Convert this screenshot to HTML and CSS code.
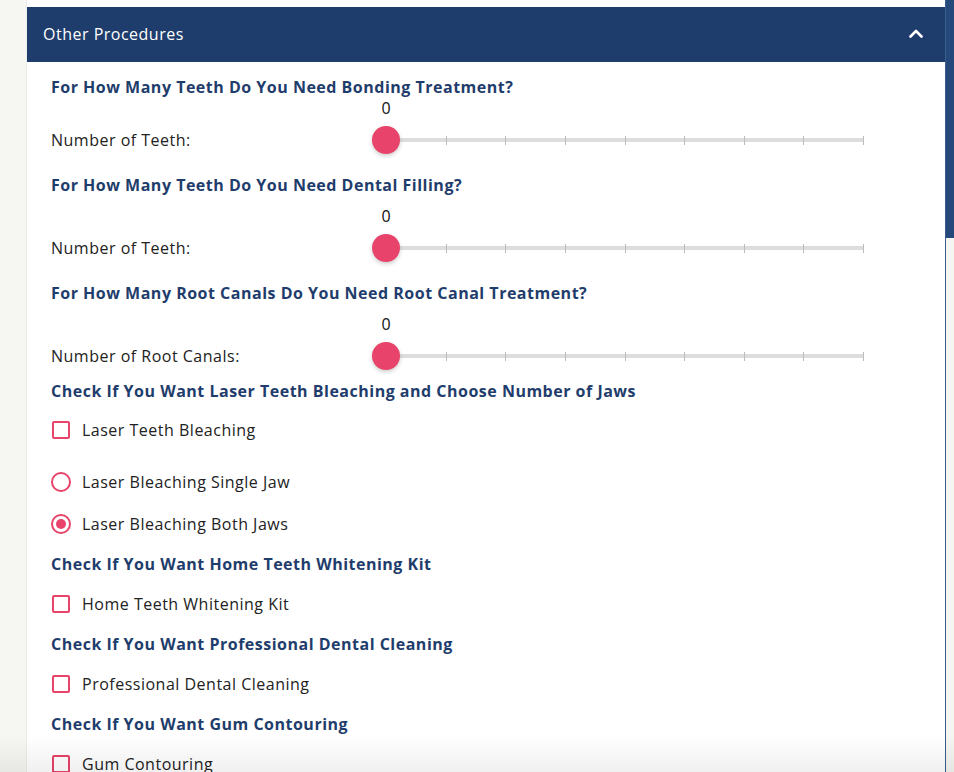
FILE: index.html
```html
<!DOCTYPE html>
<html lang="en">
<head>
<meta charset="utf-8">
<title>Other Procedures</title>
<link rel="stylesheet" href="styles.css">
</head>
<body>
<div class="page">
  <div class="gutter"></div>
  <main class="panel">
    <div class="panel-top"></div>
    <header class="acc-head">
      <span class="acc-title">Other Procedures</span>
      <svg class="chev" width="14" height="9" viewBox="0 0 14 9"><polyline points="1.5,7.5 7,2 12.5,7.5" fill="none" stroke="#fff" stroke-width="2.6" stroke-linecap="round" stroke-linejoin="round"/></svg>
    </header>
    <div class="acc-body">
      <h3 class="q q-first">For How Many Teeth Do You Need Bonding Treatment?</h3>
      <div class="slider-row slider-first">
        <span class="s-label">Number of Teeth:</span>
        <div class="slider">
          <span class="s-val">0</span>
          <div class="s-track">
            <div class="ticks"><i></i><i></i><i></i><i></i><i></i><i></i><i></i><i></i><i></i></div>
            <span class="thumb"></span>
          </div>
        </div>
      </div>

      <h3 class="q q-after-slider">For How Many Teeth Do You Need Dental Filling?</h3>
      <div class="slider-row">
        <span class="s-label">Number of Teeth:</span>
        <div class="slider">
          <span class="s-val">0</span>
          <div class="s-track">
            <div class="ticks"><i></i><i></i><i></i><i></i><i></i><i></i><i></i><i></i><i></i></div>
            <span class="thumb"></span>
          </div>
        </div>
      </div>

      <h3 class="q q-after-slider">For How Many Root Canals Do You Need Root Canal Treatment?</h3>
      <div class="slider-row">
        <span class="s-label">Number of Root Canals:</span>
        <div class="slider">
          <span class="s-val">0</span>
          <div class="s-track">
            <div class="ticks"><i></i><i></i><i></i><i></i><i></i><i></i><i></i><i></i><i></i></div>
            <span class="thumb"></span>
          </div>
        </div>
      </div>

      <h3 class="q q-after-last-slider">Check If You Want Laser Teeth Bleaching and Choose Number of Jaws</h3>
      <label class="opt opt-first"><span class="box"></span>Laser Teeth Bleaching</label>
      <label class="opt opt-radio-first"><span class="radio"></span>Laser Bleaching Single Jaw</label>
      <label class="opt opt-radio"><span class="radio on"></span>Laser Bleaching Both Jaws</label>

      <h3 class="q q-after-opt">Check If You Want Home Teeth Whitening Kit</h3>
      <label class="opt opt-std"><span class="box"></span>Home Teeth Whitening Kit</label>

      <h3 class="q q-after-opt">Check If You Want Professional Dental Cleaning</h3>
      <label class="opt opt-std"><span class="box"></span>Professional Dental Cleaning</label>

      <h3 class="q q-after-opt">Check If You Want Gum Contouring</h3>
      <label class="opt opt-std"><span class="box"></span>Gum Contouring</label>
    </div>
  </main>
  <div class="rail"><div class="rail-thumb"></div></div>
</div>
<div class="fade"></div>
</body>
</html>
```
FILE: styles.css
```css
* { box-sizing: border-box; }
html, body { margin: 0; height: 100%; overflow: hidden; }
body {
  background: #f6f6f3;
  font-family: "Open Sans", "Noto Sans", sans-serif;
  color: #222;
  letter-spacing: 0.5px;
}
.page {
  display: flex;
  height: 772px;
}
.gutter {
  width: 27px;
  flex: none;
  background: #f6f6f3;
  border-right: 1px solid #ececea;
}
.panel {
  width: 918px;
  flex: none;
  background: #fff;
}
.panel-top { height: 7px; }
.acc-head {
  height: 55px;
  background: #1f3d6c;
  display: flex;
  align-items: center;
  justify-content: space-between;
  padding: 0 22px 2px 16px;
  color: #fff;
}
.acc-title { font-size: 16px; font-weight: 500; }
.chev { display: block; margin-top: -1px; }
.acc-body {
  padding: 0 24px;
  display: flex;
  flex-direction: column;
}
.q {
  margin: 0;
  font-size: 16px;
  line-height: 22px;
  font-weight: 700;
  color: #1f3d6c;
}
.q-first { margin-top: 14px; }
.q-after-slider { margin-top: 20px; }
.q-after-last-slider { margin-top: 10px; }
.q-after-opt { margin-top: 18px; }

.slider-row {
  display: flex;
  align-items: flex-end;
  margin-top: 12px;
}
.slider-first { margin-top: 2px; }
.s-label {
  width: 321px;
  flex: none;
  font-size: 16px;
  line-height: 28px;
}
.slider {
  width: 506px;
  padding: 0 14px;
  display: flex;
  flex-direction: column;
}
.s-val {
  width: 28px;
  margin-left: -14px;
  text-align: center;
  font-size: 16px;
  line-height: 16px;
  color: #111;
  letter-spacing: 0;
}
.s-track {
  position: relative;
  height: 28px;
  margin-top: 10px;
  display: flex;
  align-items: center;
}
.ticks {
  width: 100%;
  height: 4px;
  background: #dddddd;
  display: flex;
  justify-content: space-between;
  align-items: center;
}
.ticks i {
  width: 1px;
  height: 9px;
  background: #bdbdbd;
}
.thumb {
  position: absolute;
  left: -14px;
  top: 0;
  width: 28px;
  height: 28px;
  border-radius: 50%;
  background: #e8436a;
  box-shadow: 0 2px 4px rgba(0,0,0,0.2);
}

.opt {
  display: flex;
  align-items: center;
  font-size: 16px;
  line-height: 22px;
  color: #222;
}
.opt-first { margin-top: 17px; }
.opt-radio-first { margin-top: 30px; }
.opt-radio { margin-top: 20px; }
.opt-std { margin-top: 18px; }
.box {
  width: 18px;
  height: 18px;
  border: 2px solid #e8436a;
  border-radius: 2px;
  margin: 0 12px 0 1px;
  flex: none;
}
.radio {
  width: 20px;
  height: 20px;
  border: 2px solid #e8436a;
  border-radius: 50%;
  margin-right: 11px;
  flex: none;
  display: flex;
  align-items: center;
  justify-content: center;
}
.radio.on::after {
  content: "";
  width: 10px;
  height: 10px;
  border-radius: 50%;
  background: #e8436a;
}
.rail {
  width: 9px;
  flex: none;
  background: #f5f5f2;
  border-left: 1px solid #3a5f8c;
}
.rail-thumb {
  height: 238px;
  background: #25497a;
}
.fade {
  position: fixed;
  left: 0;
  right: 0;
  bottom: 0;
  height: 36px;
  background: linear-gradient(rgba(0,0,0,0), rgba(0,0,0,0.06));
  pointer-events: none;
}
```
